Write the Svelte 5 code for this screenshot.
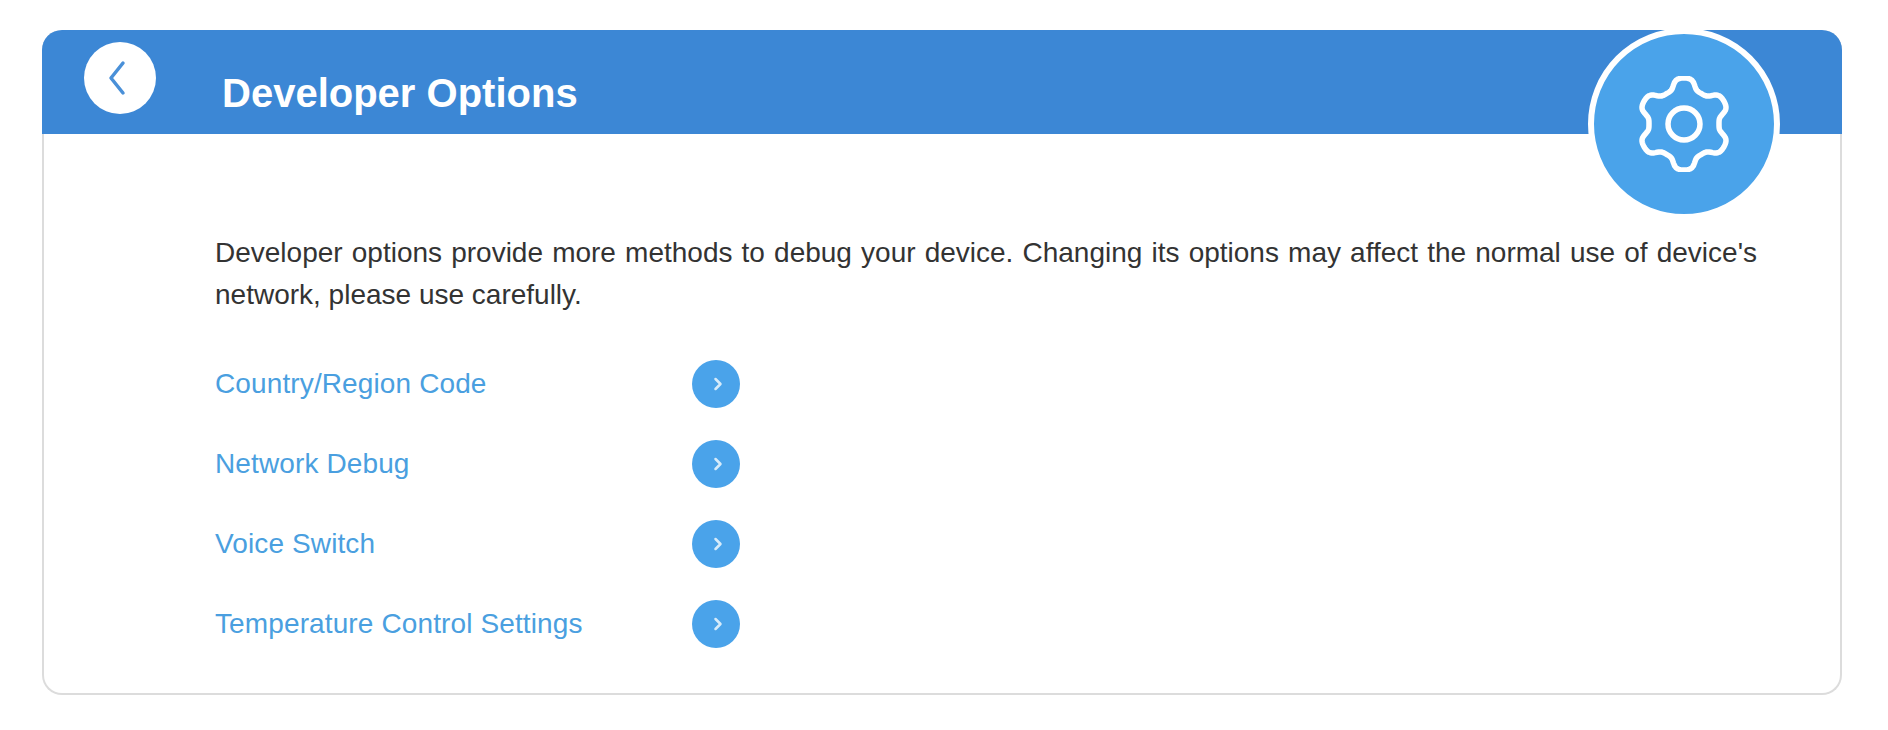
<script>
  const links = ['Country/Region Code', 'Network Debug', 'Voice Switch', 'Temperature Control Settings'];
  const pts = [];
  for (let i = 0; i < 240; i++) {
    const a = (i / 240) * Math.PI * 2;
    const r = 40.5 + 5.5 * Math.tanh(1.7 * Math.cos(6 * a)) / Math.tanh(1.7);
    pts.push(`${(48 + r * Math.sin(a)).toFixed(2)} ${(48 - r * Math.cos(a)).toFixed(2)}`);
  }
  const gear = 'M' + pts.join('L') + 'Z';
</script>

<div class="page">
  <section class="card">
    <header class="head">
      <button class="back" aria-label="Back">
        <svg viewBox="0 0 24 36" width="24" height="36"><path d="M18 3 6 18l12 15" /></svg>
      </button>
      <h1>Developer Options</h1>
      <div class="badge">
        <svg viewBox="0 0 96 96" width="96" height="96">
          <path d={gear} />
          <circle cx="48" cy="48" r="16" />
        </svg>
      </div>
    </header>
    <div class="body">
      <p>Developer options provide more methods to debug your device. Changing its options may affect the normal use of device's network, please use carefully.</p>
      <ul>
        {#each links as l}
          <li>
            <a href="#top">{l}</a>
            <span class="go">
              <svg viewBox="0 0 12 14" width="12" height="14"><path d="M3.5 2l5 5-5 5" /></svg>
            </span>
          </li>
        {/each}
      </ul>
    </div>
  </section>
</div>

<style>
  :global(body) {
    margin: 0;
    background: #fff;
  }
  .page {
    padding: 30px 46px 35px 42px;
    font-family: "Liberation Sans", Arial, sans-serif;
  }
  .card {
    box-sizing: border-box;
    width: 1800px;
    height: 665px;
    border: 2px solid #dcdcdc;
    border-top: 0;
    border-radius: 20px;
    background: #fff;
  }
  .head {
    position: relative;
    display: flex;
    align-items: center;
    height: 104px;
    margin: 0 -2px;
    background: #3c87d5;
    border-radius: 20px 20px 0 0;
  }
  .back {
    display: flex;
    align-items: center;
    justify-content: center;
    width: 72px;
    height: 72px;
    margin: -8px 0 0 42px;
    padding: 0 6px 0 0;
    border: 0;
    border-radius: 50%;
    background: #fff;
  }
  .back path {
    fill: none;
    stroke: #4a90d8;
    stroke-width: 3.5;
    stroke-linecap: round;
    stroke-linejoin: round;
  }
  h1 {
    margin: 22px 0 0 66px;
    font-size: 40px;
    line-height: 48px;
    font-weight: 700;
    color: #fff;
  }
  .badge {
    position: absolute;
    top: -2px;
    left: 1546px;
    box-sizing: border-box;
    display: flex;
    align-items: center;
    justify-content: center;
    width: 192px;
    height: 192px;
    border: 6px solid #fff;
    border-radius: 50%;
    background: #4aa3ea;
  }
  .badge path,
  .badge circle {
    fill: none;
    stroke: #fff;
    stroke-width: 5.5;
    stroke-linejoin: round;
  }
  .body {
    padding: 98px 83px 0 171px;
  }
  p {
    margin: 0;
    font-size: 28px;
    line-height: 42px;
    text-align: justify;
    color: #333;
  }
  ul {
    list-style: none;
    margin: 28px 0 0;
    padding: 0;
  }
  li {
    display: flex;
    align-items: center;
    height: 80px;
  }
  a {
    width: 477px;
    font-size: 28px;
    letter-spacing: 0.12px;
    color: #4a9fe0;
    text-decoration: none;
  }
  .go {
    display: flex;
    align-items: center;
    justify-content: center;
    box-sizing: border-box;
    width: 48px;
    height: 48px;
    padding-left: 3px;
    border-radius: 50%;
    background: #4aa3ea;
  }
  .go path {
    fill: none;
    stroke: #d6ebfa;
    stroke-width: 2.5;
    stroke-linecap: round;
    stroke-linejoin: round;
  }
</style>
